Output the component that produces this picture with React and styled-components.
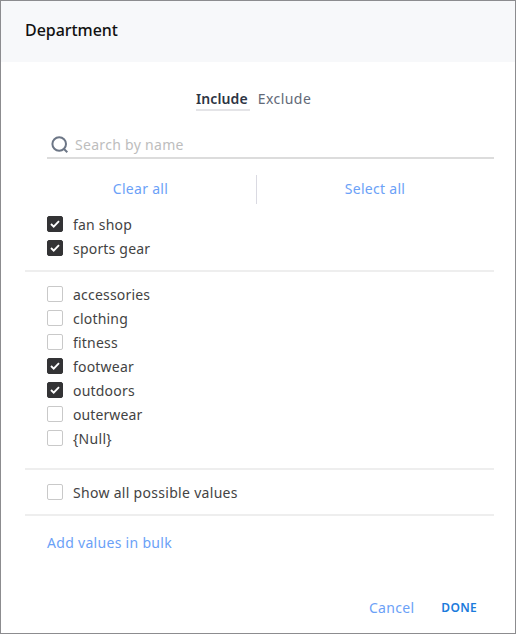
import React, { useState } from "react";
import styled, { createGlobalStyle } from "styled-components";

const GlobalStyle = createGlobalStyle`
  *, *::before, *::after { box-sizing: border-box; }
  body {
    margin: 0;
    background: #fff;
    font-family: "Noto Sans", sans-serif;
  }
`;

const Dialog = styled.main`
  display: flex;
  flex-direction: column;
  width: 516px;
  height: 634px;
  border: 1px solid #8c8c8f;
  background: #fff;
  color: #434343;
  font-size: 14px;
  line-height: 20px;
  letter-spacing: 0.3px;
`;

const Header = styled.header`
  height: 61px;
  padding: 18px 24px;
  background: #f7f8fa;
`;

const Title = styled.h1`
  margin: 0;
  color: #111;
  font-size: 16px;
  font-weight: 500;
  line-height: 22px;
  letter-spacing: -0.05px;
`;

const Tabs = styled.nav`
  display: flex;
  gap: 8px;
  margin: 27px 0 0 195px;
  height: 22px;
`;

const Tab = styled.button`
  display: flex;
  align-items: flex-start;
  height: 22px;
  padding: ${(p) => (p.$active ? "0 2px 0 0" : "0")};
  border: 0;
  border-bottom: 2px solid ${(p) => (p.$active ? "#e4e4e7" : "transparent")};
  background: none;
  color: ${(p) => (p.$active ? "#2d3443" : "#626977")};
  font: inherit;
  line-height: 19px;
  font-weight: ${(p) => (p.$active ? 600 : 400)};
  letter-spacing: ${(p) => (p.$active ? "0.1px" : "0.45px")};
`;

const SearchField = styled.label`
  display: flex;
  align-items: center;
  gap: 6px;
  height: 27px;
  margin: 21px 21px 0 46px;
  padding-left: 4px;
  border-bottom: 2px solid #dcdcdc;
`;

const SearchInput = styled.input`
  flex: 1;
  min-width: 0;
  padding: 0;
  border: 0;
  outline: 0;
  background: none;
  font: inherit;
  letter-spacing: 0.3px;
  &::placeholder { color: #bdbdbd; opacity: 1; }
`;

const BulkActions = styled.div`
  display: grid;
  grid-template-columns: 210px 236px;
  height: 29px;
  margin: 16px 0 0 46px;
`;

const ActionCell = styled.div`
  display: flex;
  align-items: center;
  justify-content: center;
  padding: 0 ${(p) => (p.$divided ? "22px" : "0")} 2px 0;
  border-right: ${(p) => (p.$divided ? "1px solid #dadae2" : "0")};
`;

const LinkButton = styled.button`
  padding: 0;
  border: 0;
  background: none;
  color: #6ba1f7;
  font: inherit;
  letter-spacing: 0.3px;
`;

const DoneButton = styled(LinkButton)`
  color: #1b7bdc;
  font-size: 12px;
  font-weight: 600;
`;

const OptionGroup = styled.div`
  display: flex;
  flex-direction: column;
  height: ${(p) => p.$height}px;
  margin: 0 21px 0 24px;
  padding: ${(p) => p.$top}px 0 0 22px;
  border-bottom: 2px solid #eeeeee;
`;

const Option = styled.label`
  display: flex;
  align-items: center;
  gap: 10px;
  height: 23.9px;
`;

const OptionText = styled.span`
  padding-top: 2px;
  letter-spacing: ${(p) => p.$spacing};
`;

const HiddenInput = styled.input`
  appearance: none;
  width: 0;
  height: 0;
  margin: 0 -10px 0 0;
`;

const Box = styled.span`
  display: flex;
  align-items: center;
  justify-content: center;
  width: 16px;
  height: 16px;
  border: 1px solid ${(p) => (p.$checked ? "#333335" : "#c9c9c9")};
  border-radius: 2px;
  background: ${(p) => (p.$checked ? "#333335" : "#fff")};
`;

const BulkRow = styled.div`
  margin: 17px 0 0 46px;
`;

const Footer = styled.footer`
  display: flex;
  align-items: center;
  justify-content: flex-end;
  gap: 27px;
  margin: auto 38px 15px 0;
`;

function SearchIcon() {
  return (
    <svg width="18" height="18" viewBox="0 0 18 18" fill="none" stroke="#6c7686" strokeWidth="2">
      <circle cx="8.2" cy="8" r="6.8" />
      <path d="M12.7 12.7l3.6 3.6" />
    </svg>
  );
}

function Checkbox({ label, initial = false, spacing = "0.2px" }) {
  const [checked, setChecked] = useState(initial);
  return (
    <Option>
      <HiddenInput type="checkbox" checked={checked} onChange={() => setChecked(!checked)} />
      <Box $checked={checked}>
        {checked && (
          <svg width="10" height="8" viewBox="0 0 10 8" fill="none" stroke="#fff" strokeWidth="1.9">
            <path d="M1 4l2.7 2.6L9 1.2" />
          </svg>
        )}
      </Box>
      <OptionText $spacing={spacing}>{label}</OptionText>
    </Option>
  );
}

export default function App() {
  const [mode, setMode] = useState("Include");
  return (
    <>
      <GlobalStyle />
      <Dialog>
        <Header><Title>Department</Title></Header>
        <Tabs>
          {["Include", "Exclude"].map((name) => (
            <Tab key={name} $active={mode === name} onClick={() => setMode(name)}>{name}</Tab>
          ))}
        </Tabs>
        <SearchField>
          <SearchIcon />
          <SearchInput placeholder="Search by name" />
        </SearchField>
        <BulkActions>
          <ActionCell $divided><LinkButton>Clear all</LinkButton></ActionCell>
          <ActionCell><LinkButton>Select all</LinkButton></ActionCell>
        </BulkActions>
        <OptionGroup $height={68} $top={8}>
          <Checkbox label="fan shop" initial />
          <Checkbox label="sports gear" initial />
        </OptionGroup>
        <OptionGroup $height={198} $top={10.4}>
          <Checkbox label="accessories" />
          <Checkbox label="clothing" />
          <Checkbox label="fitness" />
          <Checkbox label="footwear" initial />
          <Checkbox label="outdoors" initial />
          <Checkbox label="outerwear" spacing="0.1px" />
          <Checkbox label="{Null}" spacing="0.3px" />
        </OptionGroup>
        <OptionGroup $height={46} $top={10}>
          <Checkbox label="Show all possible values" spacing="0.3px" />
        </OptionGroup>
        <BulkRow><LinkButton>Add values in bulk</LinkButton></BulkRow>
        <Footer>
          <LinkButton>Cancel</LinkButton>
          <DoneButton>DONE</DoneButton>
        </Footer>
      </Dialog>
    </>
  );
}
